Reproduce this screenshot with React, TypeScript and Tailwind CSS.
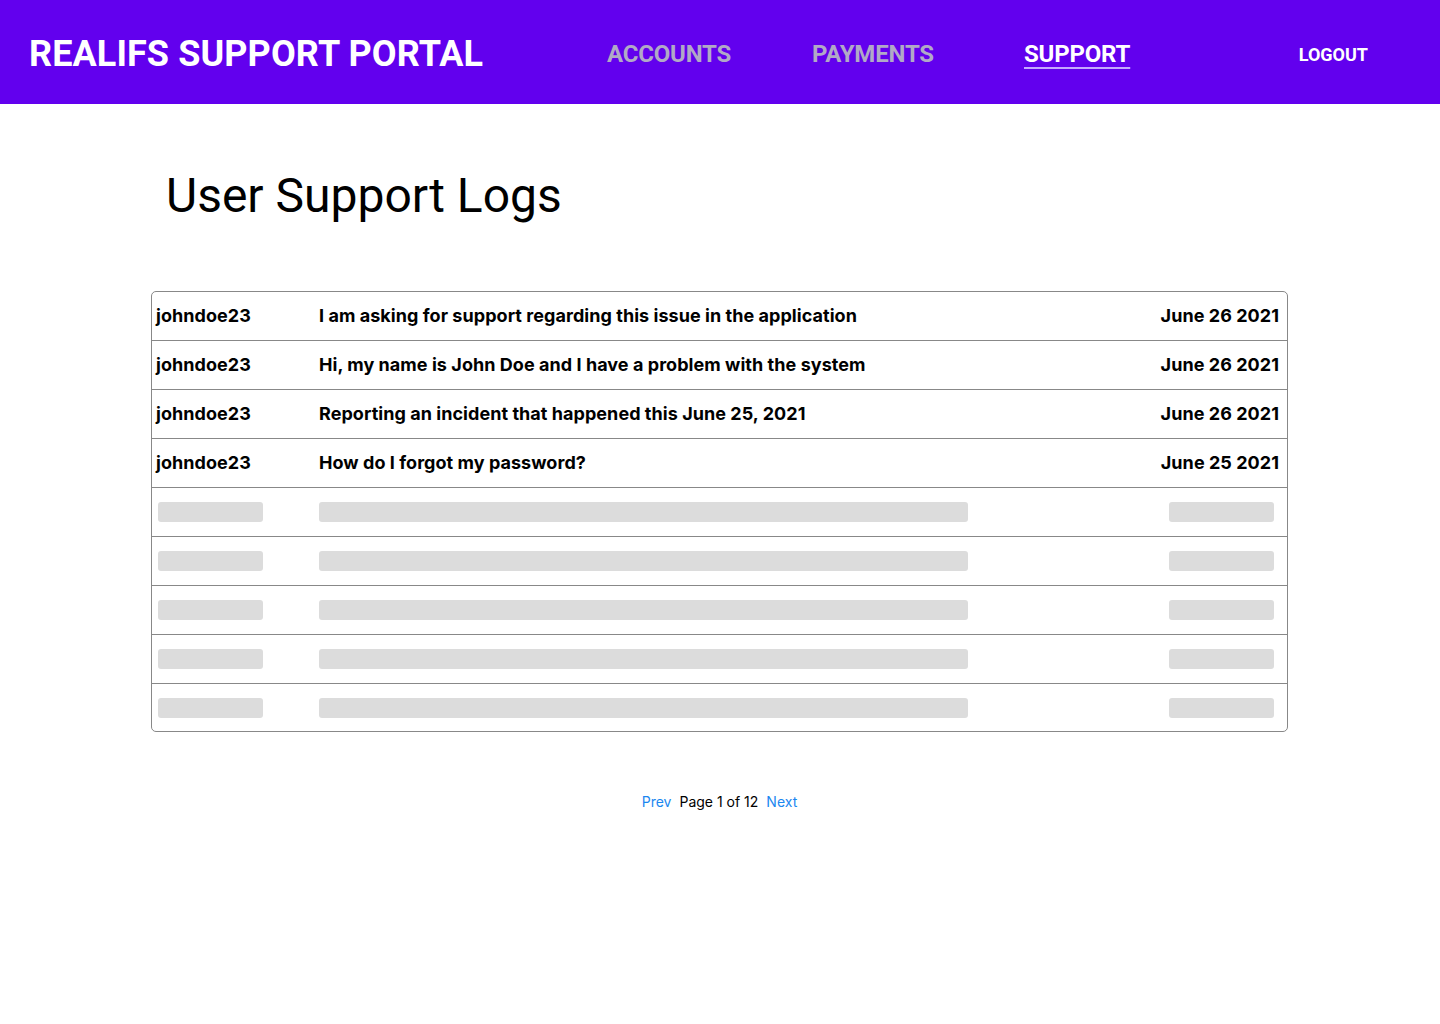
const logs = [
  { user: 'johndoe23', message: 'I am asking for support regarding this issue in the application', date: 'June 26 2021' },
  { user: 'johndoe23', message: 'Hi, my name is John Doe and I have a problem with the system', date: 'June 26 2021' },
  { user: 'johndoe23', message: 'Reporting an incident that happened this June 25, 2021', date: 'June 26 2021' },
  { user: 'johndoe23', message: 'How do I forgot my password?', date: 'June 25 2021' },
];

const roboto = { fontFamily: 'Roboto, "Liberation Sans", sans-serif' };

function NavBar() {
  return (
    <header className="flex h-[104px] items-center bg-[#6200ee] pl-[29px] pt-1 text-white" style={roboto}>
      <h1 className="w-[578px] text-[36px] font-bold tracking-[0.1px]">REALIFS SUPPORT PORTAL</h1>
      <nav className="flex items-center text-[24px] font-bold tracking-[-0.2px]">
        <a className="w-[205px] text-[#b1a9c6]">ACCOUNTS</a>
        <a className="w-[212px] text-[#b1a9c6]">PAYMENTS</a>
        <a className="underline decoration-[#c4a8ff] decoration-2 underline-offset-[5px]">SUPPORT</a>
      </nav>
      <button className="ml-auto mr-[72px] text-[18px] font-bold">LOGOUT</button>
    </header>
  );
}

function LogRow({ user, message, date }: { user: string; message: string; date: string }) {
  return (
    <div className="flex h-[49px] items-center border-b border-[#888888] pb-[2px] text-[18px] font-bold tracking-[0.05px] text-black">
      <span className="w-[167px] shrink-0 pl-1">{user}</span>
      <span className="flex-1">{message}</span>
      <span className="pr-2">{date}</span>
    </div>
  );
}

function SkeletonRow({ last }: { last: boolean }) {
  return (
    <div className={last ? 'flex h-[47px] items-center' : 'flex h-[49px] items-center border-b border-[#888888]'}>
      <div className="w-[167px] shrink-0 pl-[6px]">
        <div className="h-5 w-[105px] rounded-[3px] bg-[#dcdcdc]" />
      </div>
      <div className="h-5 w-[649px] rounded-[3px] bg-[#dcdcdc]" />
      <div className="ml-auto mr-[13px] h-5 w-[105px] rounded-[3px] bg-[#dcdcdc]" />
    </div>
  );
}

export default function App() {
  return (
    <div className="min-h-[1024px] bg-white">
      <NavBar />
      <main className="pl-[151px] pt-[64px]" style={{ fontFamily: 'Inter, "Liberation Sans", sans-serif' }}>
        <h2 className="pl-[15px] text-[48px] leading-[56px] text-black" style={roboto}>User Support Logs</h2>

        <div className="mt-[67px] w-[1137px] overflow-hidden rounded-[5px] border border-[#888888]">
          {logs.map((log, i) => (
            <LogRow key={i} {...log} />
          ))}
          {[0, 1, 2, 3, 4].map((i) => (
            <SkeletonRow key={i} last={i === 4} />
          ))}
        </div>

        <div className="mt-[59px] flex w-[1137px] justify-center gap-2 text-[14px]">
          <button className="text-[#1b87f0]">Prev</button>
          <span className="text-black">Page 1 of 12</span>
          <button className="text-[#1b87f0]">Next</button>
        </div>
      </main>
    </div>
  );
}
